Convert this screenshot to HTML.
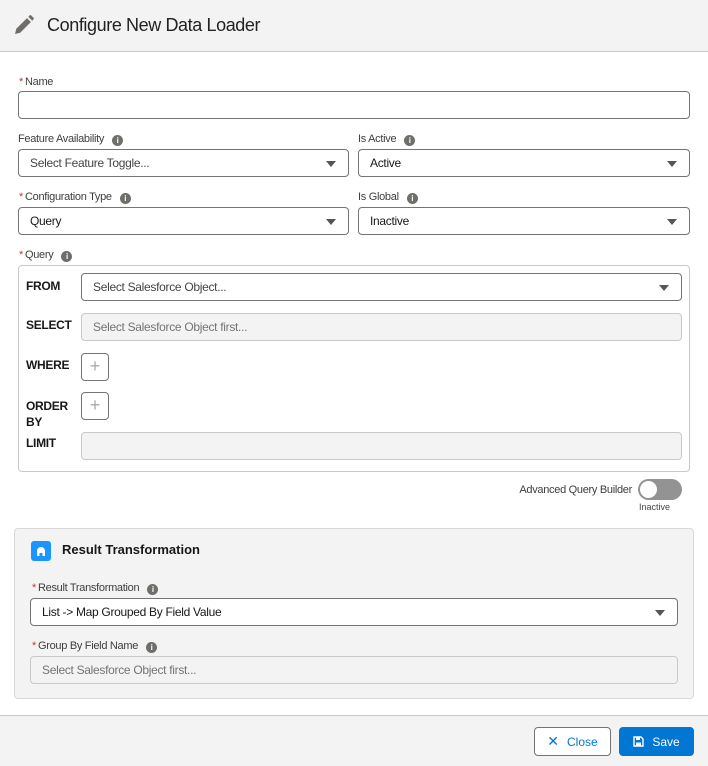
<!DOCTYPE html>
<html><head><meta charset="utf-8"><style>
*{box-sizing:border-box;margin:0;padding:0}
body{width:708px;height:766px;position:relative;background:#fff;font-family:"Liberation Sans",sans-serif;color:#181818;overflow:hidden}
.a{position:absolute}
.lbl{font-size:11px;color:#3e3e3c;letter-spacing:-.3px}
.req{color:#c23934;margin-right:2px}
.info{display:inline-block;width:11px;height:11px;border-radius:50%;background:#706e6b;color:#fff;font-size:8px;font-weight:bold;text-align:center;line-height:11px;margin-left:8px;vertical-align:-1px}
.in{border:1px solid #747474;border-radius:4px;background:#fff;font-size:12px;color:#444;padding-left:11px;display:flex;align-items:center;letter-spacing:-.3px}
.dis{background:#f3f3f3;border-color:#c9c9c9;color:#747474}
.caret{position:absolute;right:12px;top:50%;margin-top:-2px;width:0;height:0;border-left:5px solid transparent;border-right:5px solid transparent;border-top:6px solid #555}
.kw{font-size:12px;font-weight:bold;color:#181818;letter-spacing:-.3px}
.plus{border:1px solid #747474;border-radius:4px;background:#fff;color:#aaa;font-size:18px;text-align:center;line-height:25px;font-weight:300}
</style></head><body>
<div class="a" style="left:0;top:0;width:708px;height:52px;background:#f3f3f3;border-bottom:1px solid #c9c9c9"></div>
<svg class="a" style="left:14px;top:15px" width="20" height="20" viewBox="0 0 20 20"><path d="M1 19l1.3-5.2L13 3.1l3.9 3.9L6.2 17.7z" fill="#706e6b"/><path d="M14.3 1.8l1.4-1.4a1 1 0 0 1 1.4 0l2.5 2.5a1 1 0 0 1 0 1.4L18.2 5.7z" fill="#706e6b"/></svg>
<div class="a" style="left:47px;top:15px;font-size:18px;color:#222;letter-spacing:-.4px">Configure New Data Loader</div>

<div class="a lbl" style="left:19px;top:76px"><span class="req">*</span>Name</div>
<div class="a in" style="left:18px;top:91px;width:672px;height:28px"></div>

<div class="a lbl" style="left:18px;top:133px">Feature Availability<span class="info">i</span></div>
<div class="a in" style="left:18px;top:149px;width:331px;height:28px">Select Feature Toggle...<span class="caret"></span></div>
<div class="a lbl" style="left:358px;top:133px">Is Active<span class="info">i</span></div>
<div class="a in" style="left:358px;top:149px;width:332px;height:28px;color:#181818">Active<span class="caret"></span></div>

<div class="a lbl" style="left:19px;top:191px"><span class="req">*</span>Configuration Type<span class="info">i</span></div>
<div class="a in" style="left:18px;top:207px;width:331px;height:28px;color:#181818">Query<span class="caret"></span></div>
<div class="a lbl" style="left:358px;top:191px">Is Global<span class="info">i</span></div>
<div class="a in" style="left:358px;top:207px;width:332px;height:28px;color:#181818">Inactive<span class="caret"></span></div>

<div class="a lbl" style="left:19px;top:249px"><span class="req">*</span>Query<span class="info">i</span></div>
<div class="a" style="left:18px;top:265px;width:672px;height:207px;border:1px solid #c9c9c9;border-radius:4px"></div>
<div class="a kw" style="left:26px;top:279px">FROM</div>
<div class="a in" style="left:81px;top:273px;width:601px;height:28px">Select Salesforce Object...<span class="caret"></span></div>
<div class="a kw" style="left:26px;top:318px">SELECT</div>
<div class="a in dis" style="left:81px;top:313px;width:601px;height:28px">Select Salesforce Object first...</div>
<div class="a kw" style="left:26px;top:358px">WHERE</div>
<div class="a plus" style="left:81px;top:353px;width:28px;height:28px">+</div>
<div class="a kw" style="left:26px;top:398px;line-height:16px">ORDER<br>BY</div>
<div class="a plus" style="left:81px;top:392px;width:28px;height:28px">+</div>
<div class="a kw" style="left:26px;top:436px">LIMIT</div>
<div class="a in dis" style="left:81px;top:432px;width:601px;height:28px"></div>

<div class="a lbl" style="left:480px;top:484px;width:152px;text-align:right;font-size:11px">Advanced Query Builder</div>
<div class="a" style="left:638px;top:479px;width:44px;height:21px;border-radius:11px;background:#939393"></div>
<div class="a" style="left:640px;top:481px;width:17px;height:17px;border-radius:50%;background:#fff"></div>
<div class="a" style="left:639px;top:502px;font-size:9px;color:#444">Inactive</div>

<div class="a" style="left:14px;top:528px;width:680px;height:171px;background:#f3f3f3;border:1px solid #d8d8d8;border-radius:4px"></div>
<div class="a" style="left:31px;top:541px;width:20px;height:20px;border-radius:3px;background:#1b96ff"></div>
<svg class="a" style="left:35px;top:545px" width="12" height="12" viewBox="0 0 12 12"><path d="M2 11V6a4 4 0 0 1 8 0v5H7.5V8h-3v3z" fill="#fff"/></svg>
<div class="a" style="left:62px;top:542px;font-size:13px;font-weight:bold;color:#181818">Result Transformation</div>
<div class="a lbl" style="left:32px;top:582px"><span class="req">*</span>Result Transformation<span class="info">i</span></div>
<div class="a in" style="left:30px;top:598px;width:648px;height:28px;color:#181818">List -&gt; Map Grouped By Field Value<span class="caret"></span></div>
<div class="a lbl" style="left:32px;top:640px"><span class="req">*</span>Group By Field Name<span class="info">i</span></div>
<div class="a in dis" style="left:30px;top:656px;width:648px;height:28px">Select Salesforce Object first...</div>

<div class="a" style="left:0;top:715px;width:708px;height:51px;background:#f3f3f3;border-top:1px solid #c9c9c9"></div>
<div class="a" style="left:534px;top:727px;width:77px;height:29px;border:1px solid #747474;border-radius:4px;background:#fff;color:#0176d3;font-size:12px;display:flex;align-items:center;justify-content:center;gap:8px"><span style="font-size:14px">✕</span>Close</div>
<div class="a" style="left:619px;top:727px;width:75px;height:29px;border-radius:4px;background:#0176d3;color:#fff;font-size:12px;display:flex;align-items:center;justify-content:center;gap:8px">
<svg width="11" height="11" viewBox="0 0 11 11"><path d="M1 1h7l2 2v7H1z" fill="none" stroke="#fff" stroke-width="1.4"/><rect x="3" y="1" width="4" height="3" fill="#fff"/><rect x="3" y="6.5" width="5" height="3.5" fill="#fff"/></svg>Save</div>
</body></html>
